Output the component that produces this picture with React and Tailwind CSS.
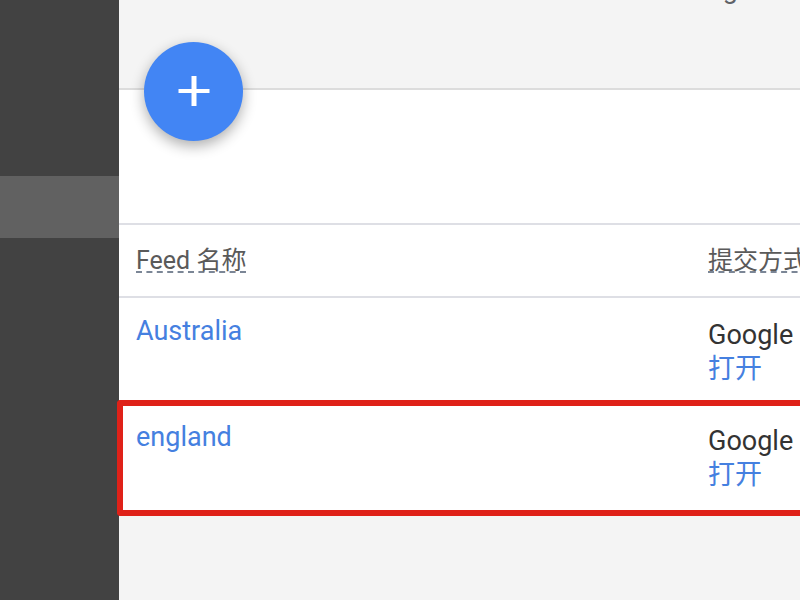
import React from 'react';

const feeds = [
  { name: 'Australia', highlighted: false },
  { name: 'england', highlighted: true },
];

function Sidebar() {
  return (
    <nav className="w-[119px] shrink-0 bg-[#424242] pt-44">
      <div className="h-[62px] bg-[#616161]" />
    </nav>
  );
}

function AddButton() {
  return (
    <button
      type="button"
      aria-label="+"
      className="absolute -top-12 left-[25px] flex size-[99px] items-center justify-center rounded-full bg-[#4285f4] text-white shadow-[0_5px_14px_rgba(0,0,0,0.32)]"
    >
      <svg viewBox="0 0 32 32" className="size-8" fill="none" stroke="currentColor">
        <path d="M0.5 15H31.5" strokeWidth="4" />
        <path d="M16 0V30" strokeWidth="5" />
      </svg>
    </button>
  );
}

function ColumnTitle({ children }) {
  return (
    <span className="inline-block border-b-2 border-dashed border-[#7b8696] leading-5">
      {children}
    </span>
  );
}

function FeedRow({ name, highlighted }) {
  return (
    <tr className="relative align-top text-[27px] leading-[34px]">
      <td className="pt-4 pb-[19px] pl-[17px]">
        <a href="#feed" className="text-[#4580e0]">{name}</a>
        {highlighted && (
          <div className="pointer-events-none absolute -top-1 right-0 -bottom-1.5 -left-0.5 rounded-l-sm border-6 border-r-0 border-[#df2118]" />
        )}
      </td>
      <td className="pt-5 pb-[18px] whitespace-nowrap text-[#333333]">
        Google 表格
        <br />
        <a href="#open" className="text-[#4580e0]">打开</a>
      </td>
    </tr>
  );
}

export default function App() {
  return (
    <div className="flex min-h-screen overflow-hidden bg-[#f4f4f4] font-[Roboto,'Noto_Sans_CJK_SC',sans-serif]">
      <Sidebar />
      <main className="min-w-0 flex-1">
        <header className="flex h-[90px] items-start justify-end border-b-2 border-[#dcdcdc] pr-[62px] text-[27px] text-[#5f6368]">
          <span className="-mt-[26px] leading-[30px]">g</span>
        </header>
        <section className="relative bg-white pb-1">
          <AddButton />
          <div className="h-[133px]" />
          <table className="w-full table-fixed border-collapse text-left">
            <colgroup>
              <col className="w-[589px]" />
              <col />
            </colgroup>
            <thead>
              <tr className="h-[73px] border-y-2 border-[#dedfe5] text-[25px] text-[#5a5a5a]">
                <th className="pl-[17px] font-normal"><ColumnTitle>Feed 名称</ColumnTitle></th>
                <th className="font-normal whitespace-nowrap"><ColumnTitle>提交方式</ColumnTitle></th>
              </tr>
            </thead>
            <tbody>
              {feeds.map((feed) => (
                <FeedRow key={feed.name} {...feed} />
              ))}
            </tbody>
          </table>
        </section>
      </main>
    </div>
  );
}
